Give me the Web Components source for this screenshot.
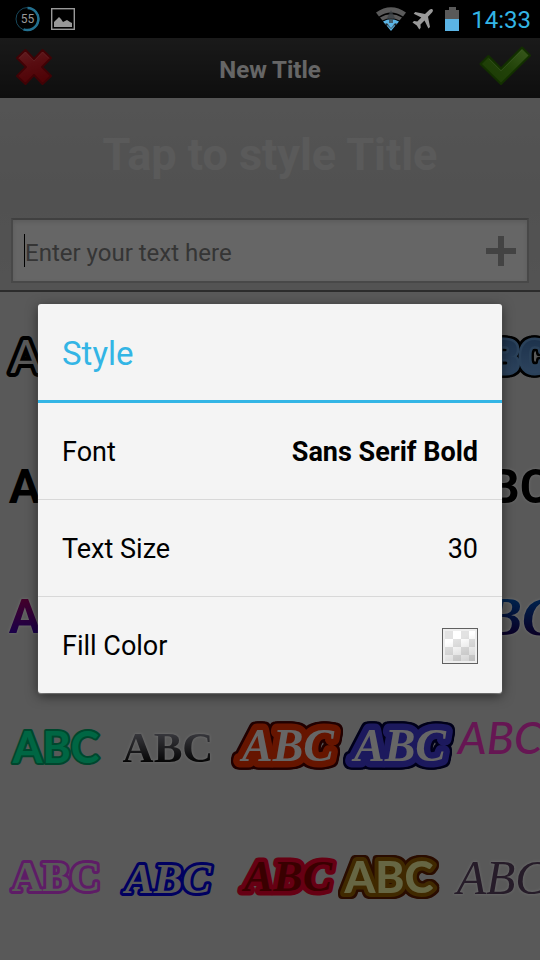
<!DOCTYPE html>
<html lang="en">
<head>
<meta charset="utf-8">
<meta name="viewport" content="width=device-width, initial-scale=1">
<title>New Title</title>
<style>
  html, body { height: 100%; }
  body { margin: 0; background: #000; font-family: Roboto, "Noto Sans", sans-serif; }
</style>
</head>
<body>
<title-app></title-app>

<script>
const define = (name, markup, setup = () => {}) => {
  const template = document.createElement('template');
  template.innerHTML = '<style>*{box-sizing:border-box}</style>' + markup;
  customElements.define(name, class extends HTMLElement {
    constructor() {
      super();
      this.attachShadow({ mode: 'open' }).append(template.content.cloneNode(true));
    }
    connectedCallback() { setup(this); }
  });
};

define('status-bar', `
<style>
  :host { display: flex; align-items: center; justify-content: space-between; height: 38px; padding: 0 9px 0 15px; background: #000; color: #33b5e5; }
  div { display: flex; align-items: center; }
  .left { gap: 11px; }
  .right { gap: 6px; }
  svg { display: block; }
  time { font-size: 24px; line-height: 38px; padding-top: 1px; }
</style>
<div class="left">
  <svg width="25" height="26" viewBox="0 0 25 26" role="img" aria-label="Battery 55 percent">
    <circle cx="12.500" cy="13" r="11.500" fill="none" stroke="#17475b" stroke-width="1"/>
    <path d="M12.500 2a11 11 0 1 1-4 21.300" fill="none" stroke="#23708f" stroke-width="2.500"/>
    <text x="12.500" y="17" text-anchor="middle" font-size="12" fill="#999" font-family="Roboto">55</text>
  </svg>
  <svg width="24" height="22" viewBox="0 0 24 22" aria-hidden="true">
    <rect x=".7" y=".7" width="22.600" height="20.600" fill="none" stroke="#999" stroke-width="1.400"/>
    <path d="M3 19v-5l2-2 3-3 2 2 2 3 2-1 2-1 3 2 2 1v4z" fill="#999"/>
  </svg>
</div>
<div class="right">
  <svg width="30" height="24" viewBox="0 0 30 24" aria-hidden="true">
    <path d="M0 5.500Q15-5 30 5.500l-3 4Q15 1.500 3 9.500z" fill="#5a5a5a"/>
    <path d="M4 10.500Q15 4 26 10.500l-2.500 3Q15 9 6.500 13.500z" fill="#5a5a5a"/>
    <path d="M7 14.500Q15 10 23 14.500l-2.500 3Q15 14.500 9.500 17.500z" fill="#5bb4e5"/>
    <path d="M10.500 18.500Q15 15.500 19.500 18.500L15 24z" fill="#5bb4e5"/>
    <path d="M15 3l4 8h-2v5h4l-6 6-6-6h4v-5h-2z" fill="#3b4145" opacity=".75"/>
    <path d="M11 16h8l-4 5z" fill="#5bb4e5"/>
  </svg>
  <svg width="21" height="21" viewBox="0 0 21 21" aria-hidden="true">
    <path d="M20.500.4c1 1 0 2.600-1 3.600L16 7.800l2 10.200-1.600 1.500-3.900-8-4 4 .2 3.200-1.400 1.700-2.500-4-4.300-2.800 1.500-1.500 3.300.5 4-4L1.700 4.800l1.500-1.700L13 5l3.700-3.500C18 .3 19.700-.4 20.500.4z" fill="#999"/>
  </svg>
  <svg width="26" height="24" viewBox="0 0 26 24" aria-hidden="true">
    <path d="M6 3h4V0h7v3h3v9H6z" fill="#595959"/><path d="M6 12h14v12H6z" fill="#5bb4e5"/>
  </svg>
  <time>14:33</time>
</div>`);

define('action-bar', `
<style>
  :host { display: grid; grid-template-columns: 1fr auto 1fr; align-items: center; height: 60px; background: linear-gradient(#424242, #242424); color: #fff; }
  h1 { margin: 0; padding-top: 4px; font-size: 24px; line-height: 32px; font-weight: 700; }
  button { display: flex; padding: 0 8px 2px 14px; border: 0; background: none; justify-self: start; }
  button:last-child { justify-self: end; }
</style>
<button aria-label="Cancel"><svg width="40" height="40" viewBox="0 0 40 40">
  <defs><linearGradient id="r" x2=".3" y2="1"><stop stop-color="#f44c55"/><stop offset=".5" stop-color="#dc1f29"/><stop offset="1" stop-color="#c50811"/></linearGradient></defs>
  <path d="M11.500 3l8.500 9 8.500-9 8.500 8-9 9 9 9-8.500 8-8.500-9-8.500 9L3 29l9-9-9-9z" fill="url(#r)" stroke="#a0060e" stroke-width="2" stroke-linejoin="round"/>
  <path d="M5 11.500L11.500 5l8.500 9 8.500-9 6.500 6.500" fill="none" stroke="#ff7479" stroke-opacity=".4"/>
</svg></button>
<h1>New Title</h1>
<button aria-label="Accept"><svg width="54" height="42" viewBox="0 0 54 42">
  <defs><linearGradient id="g" x1="1" x2="0" y2="1"><stop stop-color="#91e04b"/><stop offset=".5" stop-color="#54a616"/><stop offset="1" stop-color="#448f0e"/></linearGradient></defs>
  <path d="M2.500 18l8-8L23 22.500 44 1.500l8 8L23 38z" fill="url(#g)" stroke="#2f7500" stroke-width="2" stroke-linejoin="round"/>
  <path d="M11 13l12 12L44 4" fill="none" stroke="#b0ef7e" stroke-opacity=".35"/>
</svg></button>`);

define('title-editor', `
<style>
  :host { display: block; padding: 0 11px 7px; background: linear-gradient(#d2d2d2, #cacaca 50%, #d0d0d0); border-bottom: 2px solid #6e6e6e; }
  .preview { display: block; width: 100%; height: 120px; padding: 0 0 6px; border: 0; background: none; color: #e1e1e1; font: 700 45px/56px Roboto, sans-serif; text-align: center; }
  .field { display: flex; align-items: center; height: 65px; padding: 0 11px; background: #fff; border: 2px solid #b4b4b4; border-top-color: #a0a0a0; box-shadow: inset 0 2px 5px #e2e2e2; }
  input { flex: 1; min-width: 0; height: 33px; padding: 4px 0 0; border: 0; border-left: 1px solid #000; outline: 0; background: none; font: 24px/29px Roboto, sans-serif; }
  input::placeholder { color: #858585; opacity: 1; }
  .add { display: flex; padding: 0; border: 0; background: none; }
</style>
<button class="preview">Tap to style Title</button>
<div class="field">
  <input type="text" placeholder="Enter your text here" aria-label="Title text">
  <button class="add" aria-label="Add"><svg width="30" height="30" viewBox="0 0 30 30"><path d="M12 0h6v12h12v6H18v12h-6V18H0v-6h12z" fill="#a8a8a8"/></svg></button>
</div>`);

define('style-sample', `
<style>
  :host { display: flex; align-items: center; justify-content: center; min-width: 0; }
  button { display: flex; padding: 0; border: 0; background: none; }
  svg { display: block; overflow: visible; }
  text { font: 700 48px Roboto, sans-serif; text-anchor: middle; paint-order: stroke fill; stroke-linejoin: round; stroke-linecap: round; }
  :host([look="outline"]) text { font: 400 46px Lato, sans-serif; fill: #dfdfdf; stroke: #000; stroke-width: 8px; }
  :host([look="sky"]) text { font-weight: 900; font-size: 46px; fill: url(#sky); stroke: #6aa4e0; stroke-width: 5px; --o: #000; }
  :host([look="violet"]) text { fill: url(#violet); }
  :host([look="navy"]) text { fill: url(#navy); }
  :host([look="green"]) text { font: 700 43px Lato, sans-serif; fill: #00ffa8; stroke: #00b070; stroke-width: 4px; }
  :host([look="metal"]) text { font: 700 43px "Liberation Serif", serif; fill: url(#metal); }
  :host([look="orange"]) text, :host([look="indigo"]) text, :host([look="red"]) text, :host([look="navy"]) text { font: italic 700 46px "Liberation Serif", serif; }
  :host([look="navy"]) text { font-size: 54px; }
  :host([look="orange"]) text { fill: #fff; stroke: #ff3600; stroke-width: 13px; --o: #500000; }
  :host([look="indigo"]) text { fill: #fff; stroke: #4840e8; stroke-width: 13px; --o: #000040; }
  :host([look="red"]) text { font-size: 44px; fill: #900000; stroke: #ff0030; stroke-width: 9px; }
  :host([look="pink"]) text { font: italic 500 45px Lato, sans-serif; fill: #ff38d0; }
  :host([look="purple"]) text { font: 700 42px "Liberation Serif", serif; fill: #dfdfdf; stroke: #eb48ff; stroke-width: 6px; }
  :host([look="blue"]) text { font: italic 700 43px "Liberation Serif", serif; fill: #dfdfdf; stroke: #0000f0; stroke-width: 6px; }
  :host([look="gold"]) text { font: 900 44px Lato, sans-serif; fill: #ffffa8; stroke: #a06600; stroke-width: 8px; --o: #682000; }
  :host([look="script"]) text { font: italic 400 48px "Liberation Serif", serif; fill: #604868; }
  :host([look="sky"]) text, :host([look="gold"]) text, :host([look="orange"]) text, :host([look="indigo"]) text {
    filter: drop-shadow(2px 0 0 var(--o)) drop-shadow(-2px 0 0 var(--o)) drop-shadow(0 2px 0 var(--o)) drop-shadow(0 -2px 0 var(--o));
  }
  :host([look="halo"]) text, :host([look="violet"]) text, :host([look="navy"]) text, :host([look="metal"]) text, :host([look="script"]) text {
    filter: drop-shadow(0 0 1px #fff) drop-shadow(0 0 1px #fff);
  }
</style>
<button><svg width="96" height="48" viewBox="0 0 96 48">
  <defs>
    <linearGradient id="sky" x2="0" y2="1"><stop offset=".2" stop-color="#4a80c0"/><stop offset=".8" stop-color="#70a8e8"/></linearGradient>
    <linearGradient id="violet" x2="0" y2="1"><stop offset=".2" stop-color="#a8006a"/><stop offset=".8" stop-color="#4000b8"/></linearGradient>
    <linearGradient id="navy" x2="0" y2="1"><stop offset=".2" stop-color="#0058c0"/><stop offset=".8" stop-color="#180060"/></linearGradient>
    <linearGradient id="metal" x2="0" y2="1"><stop offset=".2" stop-color="#8c8c98"/><stop offset=".8" stop-color="#101010"/></linearGradient>
  </defs>
  <text></text>
</svg></button>`, el => {
  const baselines = { metal: 39, pink: 31, orange: 38, indigo: 38, red: 38, script: 41, purple: 38, navy: 42 };
  const centers = { orange: 56, indigo: 56, red: 56, gold: 45, pink: 44, script: 46 };
  const look = el.getAttribute('look');
  const text = el.shadowRoot.querySelector('text');
  text.setAttribute('x', centers[look] || 48);
  text.setAttribute('y', baselines[look] || 40);
  text.textContent = el.getAttribute('label');
});

define('sample-grid', `
<style>
  :host { display: grid; grid-template-columns: repeat(5, minmax(112px, 1fr)); grid-auto-rows: 130px; overflow: hidden; background: #dfdfdf; }
</style>
<slot></slot>`);

define('setting-row', `
<style>
  :host { display: block; border-bottom: 1px solid #d8d8d8; }
  :host(:last-of-type) { border-bottom: 0; }
  button { display: flex; align-items: center; justify-content: space-between; width: 100%; height: 96px; padding: 2px 24px 0; border: 0; background: none; color: #000; font: 400 27px/36px Roboto, sans-serif; text-align: left; }
  ::slotted(b) { font-weight: 700; }
</style>
<button><span><slot name="label"></slot></span><slot></slot></button>`);

define('color-swatch', `
<style>
  :host { display: block; width: 36px; height: 36px; padding: 2px; border: 1px solid #606060; background: #eee; }
  div { height: 100%; background: linear-gradient(160deg, #fff0 30%, #8886), repeating-conic-gradient(#fff 0 25%, #e2e2e2 0 50%) 0 0 / 16px 16px; }
</style>
<div></div>`);

define('style-dialog', `
<style>
  :host { display: flex; position: absolute; inset: 0; align-items: center; padding: 0 38px 1px; background: #0009; }
  section { flex: 1; min-width: 0; background: #f4f4f4; border-radius: 3px; box-shadow: 0 3px 12px #0008, 0 1px 1px #aaa; }
  h2 { margin: 0; height: 99px; padding: 0 24px; border-bottom: 3px solid #33b5e5; color: #33b5e5; font-size: 33px; line-height: 100px; font-weight: 400; }
</style>
<section role="dialog" aria-labelledby="t">
  <h2 id="t">Style</h2>
  <setting-row><span slot="label">Font</span><b>Sans Serif Bold</b></setting-row>
  <setting-row><span slot="label">Text Size</span><span>30</span></setting-row>
  <setting-row><span slot="label">Fill Color</span><color-swatch></color-swatch></setting-row>
</section>`);

define('title-app', `
<style>
  :host { display: flex; flex-direction: column; min-height: 100%; }
  main { position: relative; flex: 1; display: flex; flex-direction: column; overflow: hidden; }
  sample-grid { flex: 1; }
  .first { grid-column: 1; }
  .last { grid-column: 5; }
</style>
<status-bar></status-bar>
<main>
  <action-bar></action-bar>
  <title-editor></title-editor>
  <sample-grid>
    <style-sample class="first" look="outline" label="ABC"></style-sample>
    <style-sample class="last" look="sky" label="ABC"></style-sample>
    <style-sample class="first" label="ABC"></style-sample>
    <style-sample class="last" look="halo" label="ABC"></style-sample>
    <style-sample class="first" look="violet" label="ABC"></style-sample>
    <style-sample class="last" look="navy" label="ABC"></style-sample>
    <style-sample look="green" label="ABC"></style-sample>
    <style-sample look="metal" label="ABC"></style-sample>
    <style-sample look="orange" label="ABC"></style-sample>
    <style-sample look="indigo" label="ABC"></style-sample>
    <style-sample look="pink" label="ABC"></style-sample>
    <style-sample look="purple" label="ABC"></style-sample>
    <style-sample look="blue" label="ABC"></style-sample>
    <style-sample look="red" label="ABC"></style-sample>
    <style-sample look="gold" label="ABC"></style-sample>
    <style-sample look="script" label="ABC"></style-sample>
  </sample-grid>
  <style-dialog></style-dialog>
</main>`);
</script>
</body>
</html>
